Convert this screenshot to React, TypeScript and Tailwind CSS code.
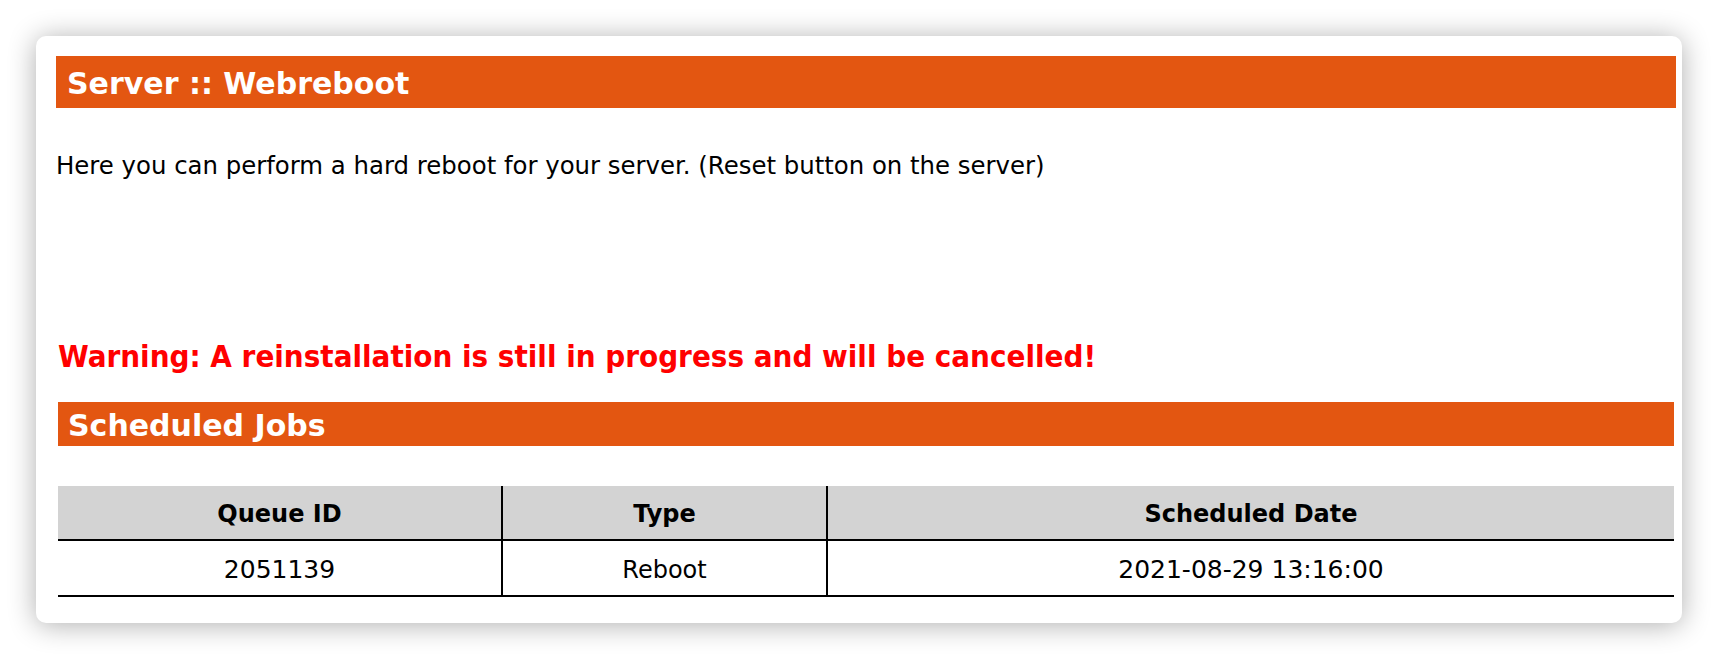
export default function App() {
  const jobs = [{ id: "2051139", type: "Reboot", date: "2021-08-29 13:16:00" }];

  return (
    <div className="bg-white p-[36px] font-['DejaVu_Sans',Verdana,sans-serif] text-black">
      <div className="rounded-[10px] bg-white pt-[20px] pl-[20px] pr-[6px] pb-[26px] shadow-[0_2px_28px_rgba(0,0,0,0.32)]">
        {/* Title bar */}
        <div className="bg-[#e35611] pl-[11px] pt-[10px] pb-[6px]">
          <h1 className="text-[30px] font-bold leading-[36px] text-white">Server :: Webreboot</h1>
        </div>

        <p className="mt-[44px] text-[24.4px] leading-[28px]">
          Here you can perform a hard reboot for your server. (Reset button on the server)
        </p>

        <p className="mt-[158px] ml-[2px] font-['DejaVu_Sans_Condensed','DejaVu_Sans',Tahoma,sans-serif] text-[31px] font-bold leading-[36px] text-[#ff0000] [font-stretch:condensed]">
          Warning: A reinstallation is still in progress and will be cancelled!
        </p>

        {/* Scheduled jobs */}
        <div className="mx-[2px] mt-[28px] bg-[#e35611] pl-[10px] pt-[6px] pb-[2px]">
          <h2 className="text-[30px] font-bold leading-[36px] text-white">Scheduled Jobs</h2>
        </div>

        <table className="mx-[2px] mt-[40px] w-[1616px] table-fixed border-separate border-spacing-0 text-[24px] leading-[28px]">
          <thead>
            <tr className="bg-[#d3d3d3]">
              <th className="w-[445px] border-r-2 border-b-2 border-black pt-[14px] pb-[11px] text-center font-bold">Queue ID</th>
              <th className="w-[325px] border-r-2 border-b-2 border-black pt-[14px] pb-[11px] text-center font-bold">Type</th>
              <th className="border-b-2 border-black pt-[14px] pb-[11px] text-center font-bold">Scheduled Date</th>
            </tr>
          </thead>
          <tbody>
            {jobs.map((j) => (
              <tr key={j.id}>
                <td className="border-r-2 border-b-2 border-black pt-[15px] pb-[11px] text-center text-[25px]">{j.id}</td>
                <td className="border-r-2 border-b-2 border-black pt-[15px] pb-[11px] text-center">{j.type}</td>
                <td className="border-b-2 border-black pt-[15px] pb-[11px] text-center text-[25px]">{j.date}</td>
              </tr>
            ))}
          </tbody>
        </table>
      </div>
    </div>
  );
}
